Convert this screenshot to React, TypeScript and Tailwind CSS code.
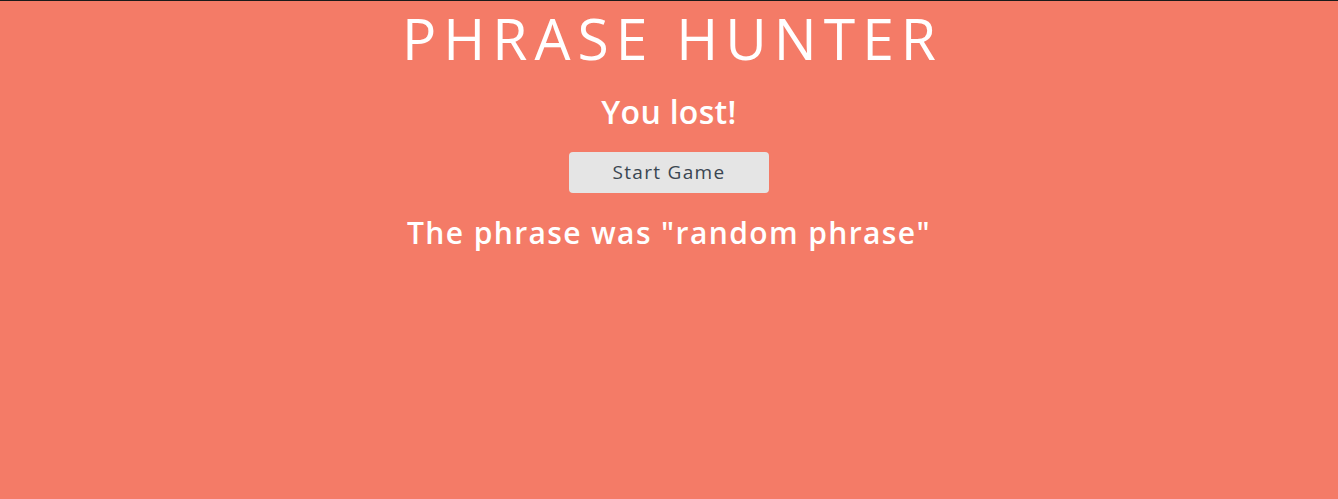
export default function App() {
  return (
    <div className="min-h-[499px] w-full border-t border-[#1a1a1a] bg-[#f47b67] font-['Open_Sans',sans-serif] text-white">
      <div className="flex flex-col items-center text-center">
        <h1 className="mt-[1px] pl-[7px] text-[57px] font-normal leading-[72px] tracking-[7px]">
          PHRASE HUNTER
        </h1>
        <h2 className="mt-[18px] text-[32px] font-semibold leading-[40px] tracking-[0.3px]">
          You lost!
        </h2>
        <button className="mt-[20px] h-[41px] w-[200px] rounded-[4px] bg-[#e5e5e5] text-[19px] tracking-[1.3px] text-[#3a4651]">
          Start Game
        </button>
        <p className="mt-[20px] text-[30px] font-semibold leading-[40px] tracking-[1.4px]">
          The phrase was "random phrase"
        </p>
      </div>
    </div>
  );
}
